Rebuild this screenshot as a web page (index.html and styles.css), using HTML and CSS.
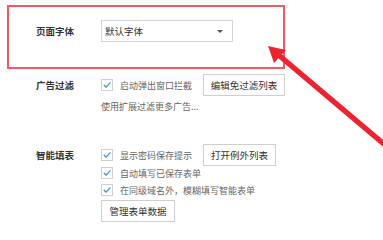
FILE: index.html
```html
<!DOCTYPE html>
<html lang="zh-CN">
<head>
<meta charset="utf-8">
<link rel="stylesheet" href="styles.css">
</head>
<body>
<div class="page">
  <div class="highlight">
    <div class="row">
      <div class="label">页面字体</div>
      <div class="select"><span>默认字体</span><span class="caret"></span></div>
    </div>
  </div>

  <div class="section s-ad">
    <div class="row line-btn">
      <div class="label">广告过滤</div>
      <div class="content">
        <label class="check"><span class="box"><svg viewBox="0 0 12 12"><path d="M2.6 6.2 L5 8.6 L9.6 3.4"/></svg></span>启动弹出窗口拦截</label>
        <span class="btn btn-1">编辑免过滤列表</span>
      </div>
    </div>
    <div class="row line sub">
      <div class="label"></div>
      <div class="content muted">使用扩展过滤更多广告...</div>
    </div>
  </div>

  <div class="section s-form">
    <div class="row line-btn">
      <div class="label">智能填表</div>
      <div class="content">
        <label class="check"><span class="box"><svg viewBox="0 0 12 12"><path d="M2.6 6.2 L5 8.6 L9.6 3.4"/></svg></span>显示密码保存提示</label>
        <span class="btn btn-2">打开例外列表</span>
      </div>
    </div>
    <div class="row line">
      <div class="label"></div>
      <div class="content">
        <label class="check"><span class="box"><svg viewBox="0 0 12 12"><path d="M2.6 6.2 L5 8.6 L9.6 3.4"/></svg></span>自动填写已保存表单</label>
      </div>
    </div>
    <div class="row line gap">
      <div class="label"></div>
      <div class="content">
        <label class="check"><span class="box"><svg viewBox="0 0 12 12"><path d="M2.6 6.2 L5 8.6 L9.6 3.4"/></svg></span>在同级域名外，模糊填写智能表单</label>
      </div>
    </div>
    <div class="row line-btn gap">
      <div class="label"></div>
      <div class="content"><span class="btn btn-3">管理表单数据</span></div>
    </div>
  </div>

  <svg class="arrow" width="383" height="233" viewBox="0 0 383 233">
    <line x1="278" y1="54.5" x2="430" y2="183" />
    <polygon points="268,46 286,50 274,63" />
  </svg>
</div>
</body>
</html>
```

FILE: styles.css
```css
html, body {
  margin: 0;
  padding: 0;
  background: #ffffff;
}
body {
  font-family: "Noto Sans CJK SC", "Noto Sans", sans-serif;
  color: #333333;
}
.page {
  position: relative;
  width: 383px;
  height: 233px;
  overflow: hidden;
}
.highlight {
  box-sizing: border-box;
  margin: 5px 0 0 7px;
  width: 278px;
  height: 64px;
  border: 2px solid #f25a62;
  padding: 13px 0 0 27px;
}
.row {
  display: flex;
  align-items: center;
}
.section {
  padding-left: 36px;
}
.label {
  width: 65px;
  flex: none;
  font-size: 9.5px;
  font-weight: bold;
  color: #333;
  line-height: 14px;
}
.select {
  box-sizing: border-box;
  width: 132px;
  height: 22px;
  border: 1px solid #d4d4d4;
  display: flex;
  align-items: center;
  justify-content: space-between;
  padding: 0 9px 0 3px;
  font-size: 9.5px;
  color: #333;
}
.caret {
  width: 0;
  height: 0;
  border-left: 3px solid transparent;
  border-right: 3px solid transparent;
  border-top: 3px solid #555;
}
.s-ad {
  margin-top: 5px;
}
.s-form {
  margin-top: 31px;
}
.line-btn {
  height: 22px;
}
.line {
  height: 14px;
}
.sub {
  margin-top: 3px;
}
.gap {
  margin-top: 3px;
}
.content {
  display: flex;
  align-items: center;
  font-size: 9px;
  color: #555;
}
.muted {
  color: #666;
}
.check {
  display: flex;
  align-items: center;
  width: 102px;
  white-space: nowrap;
  color: #666;
  font-size: 9px;
}
.box {
  box-sizing: border-box;
  width: 12px;
  height: 12px;
  border: 1px solid #cfcfcf;
  background: #fff;
  margin-right: 7px;
  flex: none;
  display: flex;
}
.box svg {
  width: 10px;
  height: 10px;
}
.box path {
  fill: none;
  stroke: #3f8fe4;
  stroke-width: 1.6;
  stroke-linecap: round;
  stroke-linejoin: round;
}
.btn {
  box-sizing: border-box;
  height: 22px;
  border: 1px solid #cfcfcf;
  background: #fff;
  display: inline-flex;
  align-items: center;
  justify-content: center;
  font-size: 9.5px;
  color: #333;
  white-space: nowrap;
}
.btn-1 { width: 82px; }
.btn-2 { width: 73px; }
.btn-3 { width: 74px; }
.arrow {
  position: absolute;
  left: 0;
  top: 0;
}
.arrow line {
  stroke: #ec2430;
  stroke-width: 5.5;
}
.arrow polygon {
  fill: #ec2430;
}
```
